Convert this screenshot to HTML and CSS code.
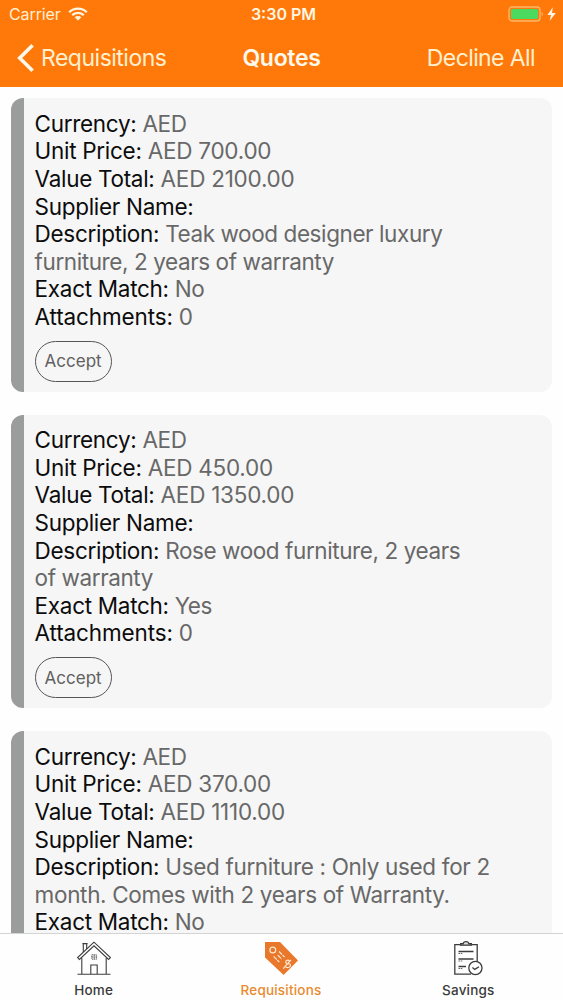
FILE: index.html
```html
<!DOCTYPE html>
<html lang="en">
<head>
  <meta charset="UTF-8">
  <meta name="viewport" content="width=device-width, initial-scale=1.0">
  <title>Quotes</title>
  <link rel="stylesheet" href="styles.css">
</head>
<body>
  <div class="app">
    <header class="header">
      <div class="status-bar">
        <div class="carrier">
          <span>Carrier</span>
          <svg class="wifi" viewBox="0 0 20 14" width="20" height="14">
            <path d="M1.2 5.2A12.6 12.6 0 0 1 18.8 5.2M4.2 8.2A8.4 8.4 0 0 1 15.8 8.2" fill="none" stroke="#fff6e2" stroke-width="2.3"/>
            <path d="M10 13.6L6.6 10.3A4.8 4.8 0 0 1 13.4 10.3Z" fill="#fff6e2"/>
          </svg>
        </div>
        <span class="time">3:30 PM</span>
        <div class="power">
          <svg viewBox="0 0 50 16" width="50" height="16">
            <rect x="1" y="1" width="31" height="14" rx="3" fill="none" stroke="#ffb869" stroke-width="1.3"/>
            <rect x="3" y="3" width="27" height="10" rx="1.2" fill="#4cd95f"/>
            <path d="M33.7 5.8Q36 8 33.7 10.4Z" fill="#ffb869"/>
            <path d="M44.8 1.2L39.4 9H43L41.6 15L47.8 7H44Z" fill="#fff6e2"/>
          </svg>
        </div>
      </div>
      <nav class="nav-bar">
        <a class="back">
          <svg viewBox="0 0 18 30" width="18" height="30">
            <path d="M15.6 2.2L2.7 15L15.6 27.8" fill="none" stroke="#fff9eb" stroke-width="3.6"/>
          </svg>
          <span>Requisitions</span>
        </a>
        <h1>Quotes</h1>
        <a class="decline">Decline All</a>
      </nav>
    </header>

    <main class="quotes">
      <div class="card">
        <p><b>Currency:</b> AED</p>
        <p class="amount"><b>Unit Price:</b> AED 700.00</p>
        <p class="amount"><b>Value Total:</b> AED 2100.00</p>
        <p><b>Supplier Name:</b></p>
        <p><b>Description:</b> Teak wood designer luxury<br>furniture, 2 years of warranty</p>
        <p><b>Exact Match:</b> No</p>
        <p class="attachments"><b>Attachments:</b> 0</p>
        <button class="accept">Accept</button>
      </div>
      <div class="card">
        <p><b>Currency:</b> AED</p>
        <p class="amount"><b>Unit Price:</b> AED 450.00</p>
        <p class="amount"><b>Value Total:</b> AED 1350.00</p>
        <p><b>Supplier Name:</b></p>
        <p><b>Description:</b> Rose wood furniture, 2 years<br>of warranty</p>
        <p><b>Exact Match:</b> Yes</p>
        <p class="attachments"><b>Attachments:</b> 0</p>
        <button class="accept">Accept</button>
      </div>
      <div class="card">
        <p><b>Currency:</b> AED</p>
        <p class="amount"><b>Unit Price:</b> AED 370.00</p>
        <p class="amount"><b>Value Total:</b> AED 1110.00</p>
        <p><b>Supplier Name:</b></p>
        <p class="long"><b>Description:</b> Used furniture : Only used for 2<br>month. Comes with 2 years of Warranty.</p>
        <p><b>Exact Match:</b> No</p>
      </div>
    </main>

    <footer class="tab-bar">
      <a class="tab">
        <svg viewBox="0 0 36 36" width="36" height="36" fill="none" stroke="#3c3c3c" stroke-width="1.1">
          <path d="M1.5 34.2H34.5M5.8 18V34M30.2 18V34"/>
          <path d="M18 2.2L1.6 17.6L3.4 19.4L18 5.8L32.6 19.4L34.4 17.6Z"/>
          <path d="M7.3 12V3.6H10.7V9M6.4 3.6H11.6"/>
          <path d="M14.8 34V25H21.2V34"/>
          <path d="M15.8 14.8H20.6V19.2H15.8ZM18.2 14.8V19.2M15.8 17H20.6" stroke-width=".8" stroke-dasharray="1.2 .6"/>
        </svg>
        <span>Home</span>
      </a>
      <a class="tab active">
        <svg viewBox="0 0 36 36" width="36" height="36">
          <path d="M2 2H17L35 20.6L20.6 35L2 17.6Z" fill="#e9782a"/>
          <g fill="none" stroke="#ffe9d6" stroke-width="1.2">
            <circle cx="9.8" cy="10" r="2.9"/>
            <path d="M16 11.5L21.5 17M14.8 15.2L18.8 19.2M10.6 16.4L16.2 22" stroke-dasharray="4.5 .7"/>
            <path d="M26.4 21.2C24.8 18.8 21.6 21 23.2 23.1C24.6 25.1 26.2 22.6 27.3 24.5C28.5 27 24.1 28.8 22.4 26.5M20.2 28.6L28 19.8"/>
          </g>
        </svg>
        <span>Requisitions</span>
      </a>
      <a class="tab">
        <svg viewBox="0 0 36 36" width="36" height="36" fill="none" stroke="#3c3c3c" stroke-width="1.3">
          <path d="M21 34.2H4.8V4.6H27.2V21.5"/>
          <path d="M10.6 5.2V3.6H13.2C13.5 1 18.5 1 18.8 3.6H21.4V5.2Z" fill="#ddd"/>
          <path d="M8.5 11.5H23.5M8.5 19H23.5M8.5 26.5H16"/>
          <path d="M8.5 13.5H13M8.5 21H13M8.5 28.5H13" stroke-width=".8" stroke-dasharray="1.5 .7"/>
          <circle cx="25.4" cy="28" r="6.6" fill="#fff"/>
          <path d="M22.4 27.6L24.8 29.4L29 26.8"/>
        </svg>
        <span>Savings</span>
      </a>
    </footer>
  </div>
</body>
</html>
```
FILE: styles.css
```css
* {
  margin: 0;
  padding: 0;
  box-sizing: border-box;
}
body {
  background: #fefefe;
  font-family: Inter, 'Liberation Sans', sans-serif;
  height: 1000px;
  overflow: hidden;
}
svg {
  display: block;
  flex: none;
}
.app {
  display: flex;
  flex-direction: column;
  height: 1000px;
}
.header {
  flex: none;
  height: 87px;
  background: #ff780a;
  color: #fff0cf;
}
.status-bar {
  display: grid;
  grid-template-columns: 1fr auto 1fr;
  align-items: center;
  height: 28px;
  padding: 0 5px 0 9px;
  font-size: 16px;
}
.carrier {
  display: flex;
  align-items: center;
  gap: 7px;
  letter-spacing: -0.1px;
}
.time {
  font-weight: 600;
  color: #fff6e2;
}
.power {
  justify-self: end;
}
.nav-bar {
  display: grid;
  grid-template-columns: 1fr auto 1fr;
  align-items: center;
  height: 60px;
  padding: 0 28px;
  font-size: 23px;
  letter-spacing: -0.5px;
}
.back {
  display: flex;
  align-items: center;
  gap: 6px;
  margin-left: -11px;
}
.nav-bar h1 {
  font-size: 23px;
  font-weight: 600;
  letter-spacing: -0.3px;
  color: #fff9eb;
}
.decline {
  justify-self: end;
  letter-spacing: -0.6px;
}
.quotes {
  flex: 1;
  min-height: 0;
  overflow: hidden;
  padding: 11px 11px 0;
}
.card {
  height: 293.5px;
  margin-bottom: 23px;
  padding: 11.8px 0 0 10.6px;
  border-left: 13px solid #9b9d9c;
  border-radius: 12px;
  background: #f6f6f6;
  color: #686868;
  font-size: 22.5px;
  line-height: 27.6px;
  letter-spacing: -0.41px;
  white-space: nowrap;
}
.card .amount {
  letter-spacing: -0.25px;
}
.card .long {
  letter-spacing: -0.33px;
}
.card b {
  font-weight: 400;
  letter-spacing: -0.3px;
  color: #0c0c0c;
}
.card .attachments b {
  letter-spacing: -0.13px;
}
.accept {
  display: block;
  width: 77px;
  height: 41px;
  margin-top: 10px;
  border: 1.5px solid #555;
  border-radius: 21px;
  background: none;
  color: #606060;
  font-family: inherit;
  font-size: 17px;
}
.tab-bar {
  display: flex;
  flex: none;
  height: 67px;
  padding-right: 1px;
  border-top: 1px solid #d4d4d4;
  background: #fefefe;
}
.tab {
  display: flex;
  flex: 1;
  flex-direction: column;
  align-items: center;
  padding-top: 6px;
  color: #3a3a3a;
  font-size: 13.5px;
  font-weight: 500;
  line-height: 16px;
  letter-spacing: 0.2px;
}
.tab span {
  margin-top: 6px;
}
.tab.active {
  color: #e98a2e;
}
```
